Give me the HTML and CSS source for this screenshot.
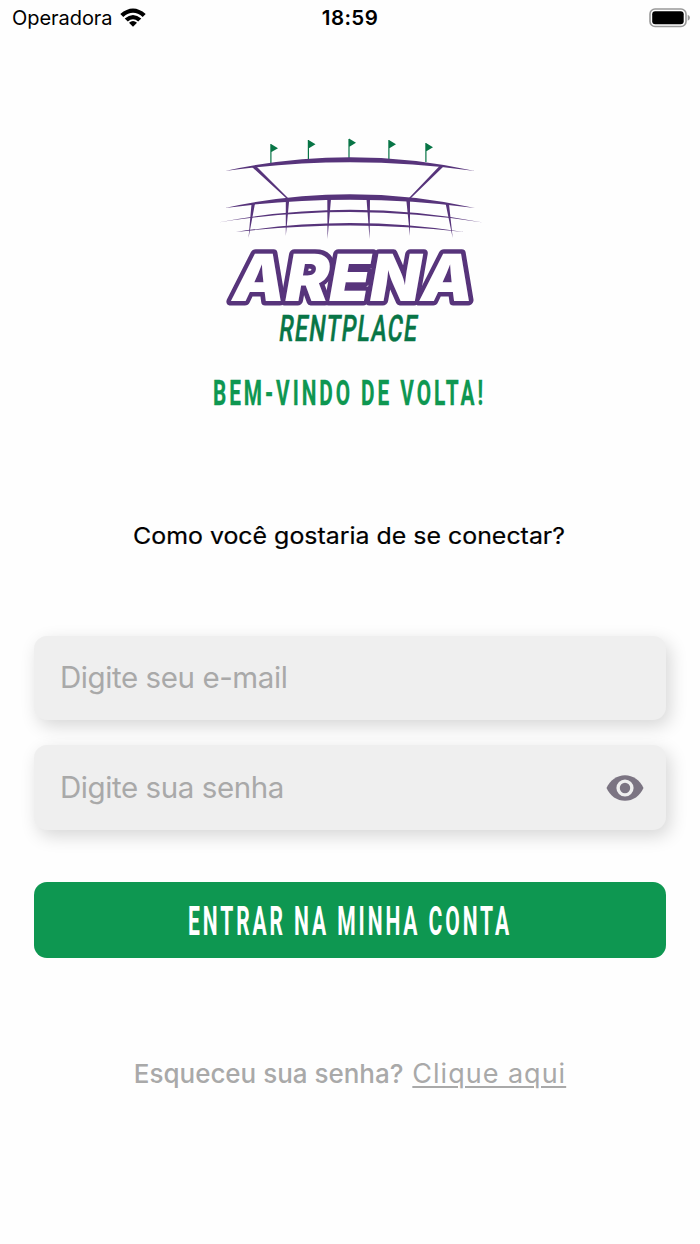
FILE: index.html
```html
<!DOCTYPE html>
<html lang="pt-BR">
<head>
<meta charset="utf-8">
<title>Arena Rentplace</title>
<link rel="stylesheet" href="styles.css">
</head>
<body>
<header class="status">
  <div class="carrier"><span class="carrier-name">Operadora</span>
    <svg class="wifi" viewBox="0 0 26 20"><path d="M.3 6Q13-5 25.700 6L22.700 9Q13 .7 3.300 9Z"/><path d="M4.700 10.400Q13 3.400 21.300 10.400L18.200 13.500Q13 9.200 7.800 13.500Z"/><path d="M9 14.800Q13 11.400 17 14.800L13 18.800Z"/></svg>
  </div>
  <time class="clock">18:59</time>
  <svg class="battery" viewBox="0 0 42 20"><rect x="1" y="1" width="36" height="17.500" rx="5" fill="none" stroke="#999" stroke-width="1.600"/><rect x="3.200" y="3.200" width="31.500" height="13" rx="3"/><path d="M38.700 6.800Q41 8 41 9.800T38.700 12.800Z" fill="#999"/></svg>
</header>
<main class="login">
  <svg class="logo" viewBox="210 130 280 220" role="img" aria-label="Arena Rentplace">
    <g class="flags">
      <path d="M270.300 144h1.200v19h-1.200zM271 144l7 4.200-7 4zM307.800 140h1.200v19h-1.200zM308.500 140l7 4.200-7 4.200zM348.400 139h1.200v19h-1.200zM349 138.500l7 4.200-7 4.200zM388.300 140h1.200v19h-1.200zM389 140l7 4.200-7 4.200zM425.300 143h1.200v19h-1.200zM426 143l7 4.200-7 4.200z"/>
    </g>
    <g class="stadium">
      <path d="M225 171Q350 143.500 475 171Q350 153.500 225 171Z"/>
      <path d="M225 208Q350 180.500 475 208Q350 191.500 225 208Z"/>
      <path d="M218 222.500Q350 197 483 222.500Q350 201.500 218 222.500Z"/>
      <path d="M236 232Q350 214 464 232Q350 219 236 232Z"/>
      <path d="M252 167L256 166L288 198L286 198ZM444 166L440 165.500L409 198L411 198Z"/>
      <path d="M251.500 204L255 203.500L248.500 238ZM285.800 200H289.200L285.800 236ZM327.300 199H331L327.500 239ZM366.500 199H370L369.600 239ZM406.300 200H410L410 236ZM445.500 203L449 204L452.700 238Z"/>
    </g>
    <g transform="translate(229.500 301) skewX(-10)"><text class="word-arena" textLength="241" lengthAdjust="spacingAndGlyphs">ARENA</text></g>
    <g transform="translate(278 341) skewX(-7)"><text class="word-place" textLength="139" lengthAdjust="spacingAndGlyphs">RENTPLACE</text></g>
  </svg>
  <h1 class="welcome"><svg class="line" viewBox="0 0 274 40"><text class="welcome-text" x="0" y="31" textLength="273" lengthAdjust="spacingAndGlyphs">BEM-VINDO DE VOLTA!</text></svg></h1>
  <p class="question"><svg class="line" viewBox="0 0 434 36"><text class="question-text" x="0" y="24" textLength="432" lengthAdjust="spacingAndGlyphs">Como você gostaria de se conectar?</text></svg></p>
  <form class="form">
    <label class="field"><input class="input" type="email" placeholder="Digite seu e-mail"></label>
    <label class="field field-password"><input class="input" type="password" placeholder="Digite sua senha">
      <svg class="eye" viewBox="0 0 38 26"><path d="M.5 13C4 5 11 .2 19 .2S34 5 37.500 13C34 21 27 25.800 19 25.800S4 21 .5 13Z" fill="#7b7482"/><circle cx="19" cy="13" r="6.900" fill="#7b7482" stroke="#efefef" stroke-width="3.400"/></svg>
    </label>
    <button class="submit" type="button"><svg class="submit-label" viewBox="0 0 632 76"><text class="submit-text" x="154" y="53" textLength="324" lengthAdjust="spacingAndGlyphs">ENTRAR NA MINHA CONTA</text></svg></button>
  </form>
  <p class="forgot"><span class="forgot-label">Esqueceu sua senha?</span><a class="forgot-link" href="#">Clique aqui</a></p>
</main>
</body>
</html>
```
FILE: styles.css
```css
* { box-sizing: border-box; }
body { margin: 0; background: #fefefe; color: #000; font-family: Inter, sans-serif; }
svg { display: block; }
.status { display: grid; grid-template-columns: 1fr auto 1fr; align-items: center; height: 35px; padding: 0 9px 0 12px; }
.carrier { display: flex; align-items: center; gap: 7.500px; font-size: 20px; letter-spacing: -.05px; }
.wifi { width: 26px; height: 20px; }
.clock { position: relative; left: -1.500px; font-size: 20.500px; font-weight: 600; letter-spacing: .4px; }
.battery { width: 42px; height: 20px; justify-self: end; }
.login { display: flex; flex-direction: column; align-items: center; padding: 95px 34px 0; }
.logo { width: 280px; height: 220px; overflow: visible; }
.flags { fill: #087546; }
.stadium { fill: #57347b; }
.word-arena { font: 900 65px Inter, sans-serif; fill: #fff; stroke: #57347b; stroke-width: 9px; stroke-linejoin: round; paint-order: stroke; }
.word-place { font: 500 36.500px Roboto, sans-serif; letter-spacing: 2px; fill: #087546; stroke: #087546; stroke-width: .5px; }
.welcome { width: 274px; height: 40px; margin: 24px 0 0; }
.line { width: 100%; height: 100%; overflow: visible; }
.welcome-text { font: 700 35.500px Roboto, sans-serif; letter-spacing: 5px; fill: #0e9751; stroke: #0e9751; stroke-width: .3px; }
.question { width: 434px; height: 36px; margin: 106px 0 0; }
.question-text { font: 400 23.500px Inter, sans-serif; stroke: #000; stroke-width: .2px; }
.form { display: flex; flex-direction: column; width: 100%; gap: 25px; margin-top: 80px; }
.field { display: flex; align-items: center; height: 84px; padding: 0 22px 0 26px; border-radius: 13px; background: #efefef; box-shadow: 4px 6px 18px rgba(0,0,0,.16); }
.field-password { height: 85px; }
.input { flex: 1; min-width: 0; height: 50px; border: 0; padding: 0 0 2px; outline: 0; background: transparent; font: 400 29.500px Inter, sans-serif; letter-spacing: -.42px; }
.input::placeholder { color: #a9a9a9; opacity: 1; }
.eye { width: 38px; height: 26px; }
.submit { display: block; width: 100%; height: 76px; margin-top: 27px; padding: 0; border: 0; border-radius: 13px; background: #0e9751; }
.submit-label { width: 100%; height: 76px; }
.submit-text { font: 700 40px Roboto, sans-serif; letter-spacing: 5.500px; fill: #fff; }
.forgot { display: flex; align-items: baseline; justify-content: center; gap: 9px; margin: 98px 0 0; color: #a9a9a9; font-size: 26px; line-height: 36px; white-space: nowrap; }
.forgot-label { font-weight: 500; letter-spacing: -.02px; }
.forgot-link { color: inherit; font-size: 27px; letter-spacing: 1px; text-decoration-thickness: 1.500px; text-underline-offset: 3px; }
```
